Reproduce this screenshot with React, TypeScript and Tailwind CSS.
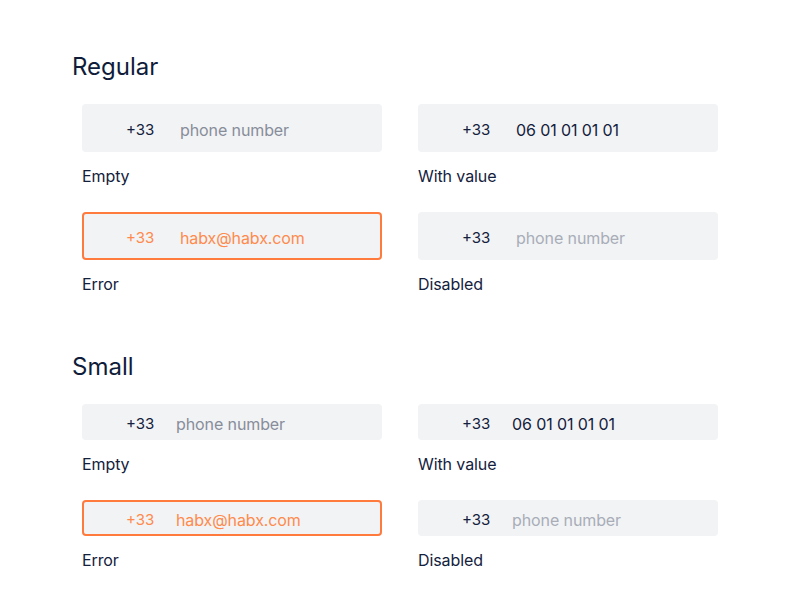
import React from "react";

type Variant = "empty" | "value" | "error" | "disabled";

function PhoneField({ variant, small }: { variant: Variant; small?: boolean }) {
  const isError = variant === "error";
  const box = small ? "h-9" : "h-12";
  const border = isError ? "border-2 border-[#ff7a3d]" : "border-2 border-transparent";
  const prefixColor = isError ? "text-[#ff8a4c]" : "text-[#14213d]";
  const prefixWidth = small ? "w-[50px]" : "w-[54px]";
  let text = "phone number";
  let textColor = "text-[#878d9a]";
  if (variant === "value") {
    text = "06 01 01 01 01";
    textColor = "text-[#14213d]";
  } else if (variant === "error") {
    text = "habx@habx.com";
    textColor = "text-[#ff8a4c]";
  } else if (variant === "disabled") {
    textColor = "text-[#a8adb8]";
  }
  return (
    <div className={`${box} ${border} rounded-[4px] bg-[#f2f3f5] flex items-center pt-1`}>
      <span className={`ml-[42px] ${prefixWidth} text-[15px] ${prefixColor}`}>+33</span>
      <span className={`text-[16px] tracking-[-0.1px] ${textColor}`}>{text}</span>
    </div>
  );
}

function Cell({ variant, label, small }: { variant: Variant; label: string; small?: boolean }) {
  return (
    <div className="flex flex-col">
      <PhoneField variant={variant} small={small} />
      <div className="mt-3 h-6 leading-6 text-[16px] tracking-[-0.1px] text-[#14213d]">{label}</div>
    </div>
  );
}

function Section({ title, small }: { title: string; small?: boolean }) {
  return (
    <div className="flex flex-col">
      <h2 className="h-8 leading-8 text-[24px] text-[#0f1c3a] font-normal">{title}</h2>
      <div className="mt-[21px] pl-[10px] grid grid-cols-[300px_300px] gap-x-9 gap-y-6">
        <Cell variant="empty" label="Empty" small={small} />
        <Cell variant="value" label="With value" small={small} />
        <Cell variant="error" label="Error" small={small} />
        <Cell variant="disabled" label="Disabled" small={small} />
      </div>
    </div>
  );
}

export default function App() {
  return (
    <div
      className="w-[800px] h-[600px] bg-white pl-[72px] pt-[51px] flex flex-col gap-[55px]"
      style={{ fontFamily: "Inter, 'Noto Sans', sans-serif" }}
    >
      <Section title="Regular" />
      <Section title="Small" small />
    </div>
  );
}
